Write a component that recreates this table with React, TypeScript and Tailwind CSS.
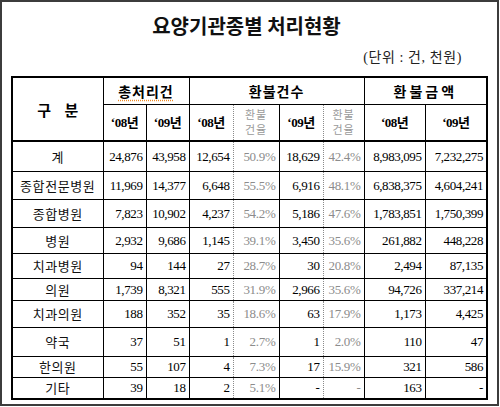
import React from "react";

type Row = {
    label: string;
    total08: string;
    total09: string;
    refund08: string;
    rate08: string;
    refund09: string;
    rate09: string;
    amount08: string;
    amount09: string;
    h: string;
};

const rows: Row[] = [
    { label: "계", total08: "24,876", total09: "43,958", refund08: "12,654", rate08: "50.9%", refund09: "18,629", rate09: "42.4%", amount08: "8,983,095", amount09: "7,232,275", h: "h-[30px]" },
    { label: "종합전문병원", total08: "11,969", total09: "14,377", refund08: "6,648", rate08: "55.5%", refund09: "6,916", rate09: "48.1%", amount08: "6,838,375", amount09: "4,604,241", h: "h-[28px]" },
    { label: "종합병원", total08: "7,823", total09: "10,902", refund08: "4,237", rate08: "54.2%", refund09: "5,186", rate09: "47.6%", amount08: "1,783,851", amount09: "1,750,399", h: "h-[28px]" },
    { label: "병원", total08: "2,932", total09: "9,686", refund08: "1,145", rate08: "39.1%", refund09: "3,450", rate09: "35.6%", amount08: "261,882", amount09: "448,228", h: "h-[26px]" },
    { label: "치과병원", total08: "94", total09: "144", refund08: "27", rate08: "28.7%", refund09: "30", rate09: "20.8%", amount08: "2,494", amount09: "87,135", h: "h-[25px]" },
    { label: "의원", total08: "1,739", total09: "8,321", refund08: "555", rate08: "31.9%", refund09: "2,966", rate09: "35.6%", amount08: "94,726", amount09: "337,214", h: "h-[22px]" },
    { label: "치과의원", total08: "188", total09: "352", refund08: "35", rate08: "18.6%", refund09: "63", rate09: "17.9%", amount08: "1,173", amount09: "4,425", h: "h-[27px]" },
    { label: "약국", total08: "37", total09: "51", refund08: "1", rate08: "2.7%", refund09: "1", rate09: "2.0%", amount08: "110", amount09: "47", h: "h-[29px]" },
    { label: "한의원", total08: "55", total09: "107", refund08: "4", rate08: "7.3%", refund09: "17", rate09: "15.9%", amount08: "321", amount09: "586", h: "h-[21px]" },
    { label: "기타", total08: "39", total09: "18", refund08: "2", rate08: "5.1%", refund09: "-", rate09: "-", amount08: "163", amount09: "-", h: "h-[22px]" },
];

// shared cell styles
const cell = "border border-black p-0";
const dotR = "[border-right-style:dotted] border-r-[#8a8a8a]";
const dotL = "[border-left-style:dotted] border-l-[#8a8a8a]";
const num = "text-right pr-[3px] text-black tracking-[-0.4px]";
const rate = "text-right pr-[3px] text-[#8c8c8c] tracking-[-0.3px]";
const kr = "font-['Noto_Sans_CJK_KR',sans-serif]";

const App = () => {
    return (
        <div className="w-[500px] h-[407px] bg-white">
            <div className="w-[499px] h-[406px] border-2 border-[#3c3c3c] font-['Liberation_Serif','Noto_Sans_CJK_KR',serif]">
                <div className={`h-[48px] pt-[12px] text-center leading-[24px] text-[20px] font-bold text-[#111] ${kr} pr-[6px]`}>
                    요양기관종별 처리현황
                </div>
                <div className="h-[26px] flex justify-end pr-[35px] leading-[16px] text-[14px] tracking-[0.6px] text-[#222]">
                    (단위 : 건, 천원)
                </div>
                <table className="ml-[9px] w-[475px] table-fixed border-collapse border-2 border-black text-[13px] leading-none">
                    <colgroup>
                        <col className="w-[91px]" />
                        <col className="w-[43px]" />
                        <col className="w-[43px]" />
                        <col className="w-[44px]" />
                        <col className="w-[46px]" />
                        <col className="w-[44px]" />
                        <col className="w-[41px]" />
                        <col className="w-[61px]" />
                        <col className="w-[62px]" />
                    </colgroup>
                    <thead>
                        <tr className="h-[27px]">
                            <th rowSpan={2} className={`${cell} border-b-2 text-[15px] font-bold ${kr} whitespace-pre`}>
                                구    분
                            </th>
                            <th colSpan={2} className={`${cell} text-[14px] font-bold ${kr} tracking-[1px]`}>
                                <span className="underline decoration-dotted decoration-[#f08a24] underline-offset-[3px]">총처리건</span>
                            </th>
                            <th colSpan={4} className={`${cell} text-[14px] font-bold ${kr} tracking-[1px]`}>
                                환불건수
                            </th>
                            <th colSpan={2} className={`${cell} text-[14px] font-bold ${kr} tracking-[3px]`}>
                                환불금액
                            </th>
                        </tr>
                        <tr className="h-[37px] text-[13px] font-bold tracking-[-0.5px]">
                            <th className={`${cell} border-b-2`}>‘08년</th>
                            <th className={`${cell} border-b-2`}>‘09년</th>
                            <th className={`${cell} border-b-2 ${dotR}`}>‘08년</th>
                            <th className={`${cell} border-b-2 ${dotL} font-normal text-[11px] tracking-[1px] text-[#9a9a9a] leading-[15px] ${kr}`}>
                                환불
                                <br />
                                건율
                            </th>
                            <th className={`${cell} border-b-2 ${dotR}`}>‘09년</th>
                            <th className={`${cell} border-b-2 ${dotL} font-normal text-[11px] tracking-[1px] text-[#9a9a9a] leading-[15px] ${kr}`}>
                                환불
                                <br />
                                건율
                            </th>
                            <th className={`${cell} border-b-2`}>‘08년</th>
                            <th className={`${cell} border-b-2`}>‘09년</th>
                        </tr>
                    </thead>
                    <tbody>
                        {rows.map((r) => (
                            <tr key={r.label} className={r.h}>
                                <td className={`${cell} text-center text-[13px] tracking-[0.6px] text-[#111] ${kr}`}>
                                    {r.label}
                                </td>
                                <td className={`${cell} ${num}`}>{r.total08}</td>
                                <td className={`${cell} ${num}`}>{r.total09}</td>
                                <td className={`${cell} ${num} ${dotR}`}>{r.refund08}</td>
                                <td className={`${cell} ${rate} ${dotL}`}>{r.rate08}</td>
                                <td className={`${cell} ${num} ${dotR}`}>{r.refund09}</td>
                                <td className={`${cell} ${rate} ${dotL}`}>{r.rate09}</td>
                                <td className={`${cell} ${num}`}>{r.amount08}</td>
                                <td className={`${cell} ${num}`}>{r.amount09}</td>
                            </tr>
                        ))}
                    </tbody>
                </table>
            </div>
        </div>
    );
};

export default App;
